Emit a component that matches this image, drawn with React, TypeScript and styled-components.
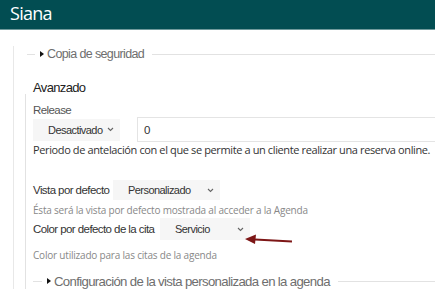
import React from "react";
import styled, { createGlobalStyle } from "styled-components";

const Global = createGlobalStyle`
  html, body { margin: 0; padding: 0; background: #fff; }
  body { font-family: "Liberation Sans", Arial, sans-serif; overflow: hidden; }
`;

const Page = styled.div`
  width: 435px;
  height: 289px;
  overflow: hidden;
  position: relative;
`;

const Header = styled.header`
  height: 30px;
  background: #024d52;
  border-bottom: 1px solid #6f9a9c;
  box-sizing: border-box;
  display: flex;
  align-items: center;
  padding: 0 0 3px 10px;
  color: #fff;
  font-family: "Open Sans", sans-serif;
  font-size: 18px;
  letter-spacing: -0.04em;
`;

const Content = styled.div`
  margin-left: 13px;
  border-left: 1px solid #e8e8e8;
  padding-left: 11px;
  height: 258px;
`;

const Legend = styled.div<{ $indent: number; $size: number; $top: number }>`
  display: flex;
  align-items: center;
  gap: 5px;
  padding-left: ${(p) => p.$indent}px;
  margin-top: ${(p) => p.$top}px;
  color: #6e6e6e;
  font-size: ${(p) => p.$size}px;
  letter-spacing: -0.05em;
  height: 16px;
  white-space: nowrap;
`;

const Rule = styled.span<{ $w?: number }>`
  height: 1px;
  background: #e2e2e2;
  ${(p) => (p.$w ? `width: ${p.$w}px;` : "flex: 1; margin-left: 3px;")}
`;

const Tri = styled.span`
  width: 0;
  height: 0;
  border-top: 3px solid transparent;
  border-bottom: 3px solid transparent;
  border-left: 4px solid #111;
  margin-right: -2px;
`;

const Title = styled.div`
  margin-top: 20px;
  padding-left: 8px;
  font-size: 13px;
  letter-spacing: -0.05em;
  color: #222;
  height: 12px;
  line-height: 12px;
`;

const Section = styled.div`
  border-left: 1px solid #e2e2e2;
  padding-left: 7px;
  padding-top: 9px;
`;

const Label = styled.div`
  font-size: 11.5px;
  letter-spacing: -0.05em;
  color: #555;
  line-height: 14px;
`;

const Row = styled.div<{ $top: number }>`
  display: flex;
  align-items: center;
  margin-top: ${(p) => p.$top}px;
`;

const Select = styled.div<{ $w: number; $h: number }>`
  width: ${(p) => p.$w}px;
  height: ${(p) => p.$h}px;
  flex-shrink: 0;
  box-sizing: border-box;
  background: #f6f6f6;
  display: flex;
  align-items: center;
  justify-content: space-between;
  padding: 0 6px 0 15px;
  font-size: 11px;
  letter-spacing: -0.05em;
  color: #333;
  white-space: nowrap;
`;

const Input = styled.div`
  flex: 1;
  margin-left: 17px;
  height: 25px;
  box-sizing: border-box;
  border: 1px solid #e4e4e4;
  border-right: none;
  display: flex;
  align-items: center;
  padding-left: 6px;
  font-size: 11.5px;
  color: #333;
`;

const Help = styled.div<{ $size: number; $color: string; $top: number; $ls: number }>`
  font-family: "Open Sans", sans-serif;
  font-size: ${(p) => p.$size}px;
  letter-spacing: ${(p) => p.$ls}px;
  color: ${(p) => p.$color};
  margin-top: ${(p) => p.$top}px;
  line-height: 14px;
  white-space: nowrap;
`;

const FieldLabel = styled.span<{ $w: number }>`
  width: ${(p) => p.$w}px;
  flex-shrink: 0;
  font-size: 11.5px;
  letter-spacing: -0.05em;
  color: #333;
  white-space: nowrap;
`;

const Arrow = styled.svg`
  position: absolute;
  left: 243px;
  top: 233px;
`;

const Chevron = () => (
  <svg width="7" height="5" viewBox="0 0 7 5">
    <path d="M1 1 L3.5 3.5 L6 1" fill="none" stroke="#666" strokeWidth="1.1" />
  </svg>
);

export default function App() {
  return (
    <Page>
      <Global />
      <Header>Siana</Header>
      <Content>
        <Legend $indent={2} $size={12.5} $top={16}>
          <Rule $w={8} />
          <Tri />
          <span>Copia de seguridad</span>
          <Rule />
        </Legend>
        <Title>Avanzado</Title>
        <Section>
          <Label>Release</Label>
          <Row $top={0}>
            <Select $w={87} $h={22}>
              <span>Desactivado</span>
              <Chevron />
            </Select>
            <Input>0</Input>
          </Row>
          <Help $size={11} $color="#333" $top={1} $ls={-0.38}>
            Periodo de antelación con el que se permite a un cliente realizar una reserva online.
          </Help>
          <Row $top={23}>
            <FieldLabel $w={80}>Vista por defecto</FieldLabel>
            <Select $w={107} $h={20}>
              <span>Personalizado</span>
              <Chevron />
            </Select>
          </Row>
          <Help $size={10} $color="#888" $top={3} $ls={-0.2}>
            Ésta será la vista por defecto mostrada al acceder a la Agenda
          </Help>
          <Row $top={1}>
            <FieldLabel $w={127}>Color por defecto de la cita</FieldLabel>
            <Select $w={90} $h={22}>
              <span>Servicio</span>
              <Chevron />
            </Select>
          </Row>
          <Help $size={10} $color="#888" $top={8} $ls={-0.2}>
            Color utilizado para las citas de la agenda
          </Help>
          <Legend $indent={0} $size={13.2} $top={11}>
            <Rule $w={9} />
            <Tri />
            <span>Configuración de la vista personalizada en la agenda</span>
            <Rule />
          </Legend>
        </Section>
      </Content>
      <Arrow width="52" height="14" viewBox="0 0 52 14">
        <path d="M49 8.5 L12 6.5" stroke="#7d1616" strokeWidth="2.2" fill="none" />
        <path d="M2 6 L13 1.5 L12 11 Z" fill="#7d1616" />
      </Arrow>
    </Page>
  );
}
